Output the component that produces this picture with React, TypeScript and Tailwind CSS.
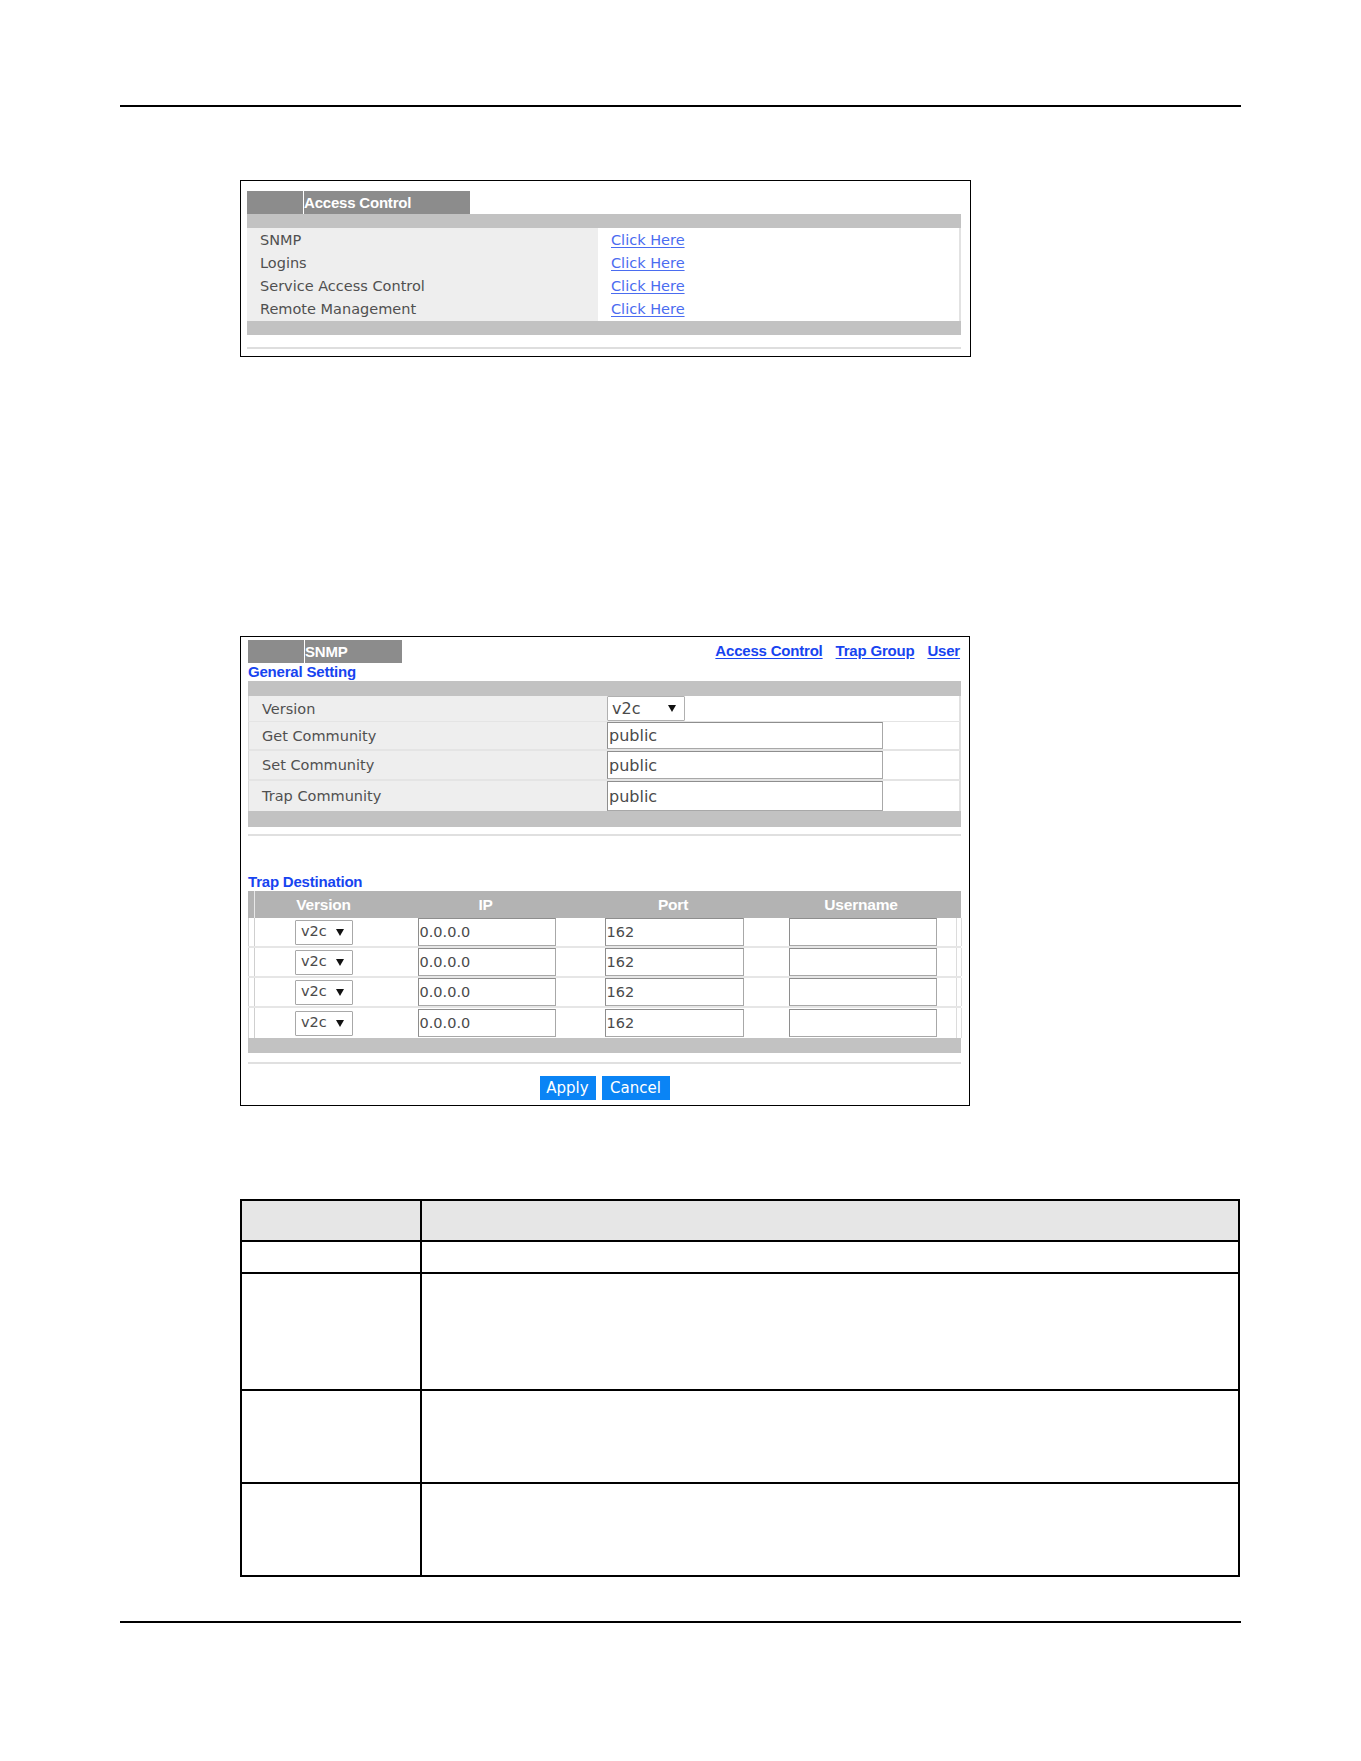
import React from "react";

const REG = { fontFamily: '"DejaVu Sans", "Liberation Sans", sans-serif' };
const BOLD = { fontFamily: '"Liberation Sans", Arial, sans-serif' };

function Arrow() {
  return (
    <svg width="8" height="7" viewBox="0 0 8 7" className="shrink-0">
      <path d="M0 0 H8 L4 7 Z" fill="#111" />
    </svg>
  );
}

function Tab({ label, width }: { label: string; width: string }) {
  return (
    <div className={`flex h-[23px] bg-[#8c8c8c] ${width}`}>
      <div className="w-[56px] shrink-0" />
      <div className="w-px bg-white shrink-0" />
      <div
        className="text-white font-bold text-[15px] leading-[23px] tracking-[-0.2px]"
        style={BOLD}
      >
        {label}
      </div>
    </div>
  );
}

function AccessRow({ label, last }: { label: string; last?: boolean }) {
  return (
    <div
      className={`grid grid-cols-[351px_1fr] ${last ? "h-[24px]" : "h-[23px] border-b-2 border-[#e2e2e2]"} border-r-2 border-r-[#e2e2e2]`}
    >
      <div className="bg-[#eeeeee] pl-[13px] pt-[2px] text-[14.5px] leading-[21px] text-[#505050]" style={REG}>
        {label}
      </div>
      <div className="bg-white pl-[13px] pt-[2px] text-[14.5px] leading-[21px]" style={REG}>
        <a className="text-[#4a6cf0] underline underline-offset-2 decoration-1">Click Here</a>
      </div>
    </div>
  );
}

function GeneralRow({ label, h, children, last }: { label: string; h: string; children: React.ReactNode; last?: boolean }) {
  return (
    <div
      className={`grid grid-cols-[358px_1fr] ${h} border-l border-[#d8d8d8] border-r-2 border-r-[#e0e0e0] ${last ? "" : "border-b-2 border-b-[#e4e4e4]"}`}
    >
      <div className="bg-[#eeeeee] pl-[13px] pt-[2px] flex items-center text-[14.5px] text-[#505050]" style={REG}>
        {label}
      </div>
      <div className="bg-white flex items-center">{children}</div>
    </div>
  );
}

function TextBox({ value }: { value: string }) {
  return (
    <div
      className="w-[276px] h-full border border-[#a8a8a8] border-t-[#8e8e8e] border-l-[#8e8e8e] pl-[1px] pt-[1px] flex items-center text-[16px] text-[#4a4a4a] bg-white"
      style={REG}
    >
      {value}
    </div>
  );
}

function TrapRow({ last }: { last?: boolean }) {
  return (
    <div className={`flex h-[30px] ${last ? "" : "border-b-2 border-[#e6e6e6]"}`}>
      <div className="w-[6px] shrink-0 border-l border-[#cfcfcf]" />
      <div className="grid grid-cols-[138px_187px_188px_188px] border-l border-[#cfcfcf]">
        <div className="flex items-center justify-center">
          <div
            className="w-[58px] h-[25px] border border-[#a8a8a8] rounded-[1px] flex items-center justify-between pl-[5px] pr-[8px] text-[14.5px] text-[#4a4a4a]"
            style={REG}
          >
            <span>v2c</span>
            <Arrow />
          </div>
        </div>
        <div className="flex items-center justify-center">
          <div
            className="w-[138px] h-[28px] border border-[#a8a8a8] border-t-[#8e8e8e] border-l-[#8e8e8e] pl-[1px] pt-[1px] flex items-center text-[14.5px] text-[#4a4a4a]"
            style={REG}
          >
            0.0.0.0
          </div>
        </div>
        <div className="flex items-center justify-center">
          <div
            className="w-[139px] h-[28px] border border-[#a8a8a8] border-t-[#8e8e8e] border-l-[#8e8e8e] pl-[1px] pt-[1px] flex items-center text-[14.5px] text-[#4a4a4a]"
            style={REG}
          >
            162
          </div>
        </div>
        <div className="flex items-center pl-[21px]">
          <div className="w-[148px] h-[28px] border border-[#a8a8a8] border-t-[#8e8e8e] border-l-[#8e8e8e]" />
        </div>
      </div>
      <div className="w-[6px] shrink-0 border-l border-[#dcdcdc] border-r border-r-[#dcdcdc]" />
    </div>
  );
}

export default function App() {
  return (
    <div className="w-[1361px] h-[1761px] bg-white overflow-hidden">
      {/* page header rule */}
      <div className="pt-[105px] pl-[120px]">
        <div className="w-[1121px] h-[2px] bg-black" />
      </div>

      {/* Access Control panel */}
      <div className="mt-[73px] ml-[240px] w-[731px] h-[177px] border border-black pt-[10px] pl-[6px] pr-[9px]">
        <Tab label="Access Control" width="w-[223px]" />
        <div className="h-[14px] bg-[#c2c2c2]" />
        <AccessRow label="SNMP" />
        <AccessRow label="Logins" />
        <AccessRow label="Service Access Control" />
        <AccessRow label="Remote Management" last />
        <div className="h-[14px] bg-[#c2c2c2]" />
        <div className="mt-[12px] h-[2px] bg-[#dedede]" />
      </div>

      {/* SNMP panel */}
      <div className="mt-[279px] ml-[240px] w-[730px] h-[470px] border border-black pt-[3px] pl-[7px] pr-[8px]">
        <div className="flex justify-between items-center h-[23px]">
          <Tab label="SNMP" width="w-[154px]" />
          <div className="flex gap-[13px] pr-[1px] text-[15px] font-bold text-[#1744f0] tracking-[-0.2px]" style={BOLD}>
            <a className="underline underline-offset-2">Access Control</a>
            <a className="underline underline-offset-2">Trap Group</a>
            <a className="underline underline-offset-2">User</a>
          </div>
        </div>
        <div className="h-[18px] text-[15px] leading-[18px] font-bold text-[#1744f0] tracking-[-0.2px]" style={BOLD}>
          General Setting
        </div>
        <div className="h-[15px] bg-[#c2c2c2]" />
        <GeneralRow label="Version" h="h-[26px]">
          <div
            className="w-[78px] h-[25px] border border-[#b0b0b0] rounded-[1px] flex items-center justify-between pl-[4px] pr-[8px] text-[16px] text-[#4a4a4a]"
            style={REG}
          >
            <span>v2c</span>
            <Arrow />
          </div>
        </GeneralRow>
        <GeneralRow label="Get Community" h="h-[29px]">
          <TextBox value="public" />
        </GeneralRow>
        <GeneralRow label="Set Community" h="h-[30px]">
          <TextBox value="public" />
        </GeneralRow>
        <GeneralRow label="Trap Community" h="h-[30px]" last>
          <TextBox value="public" />
        </GeneralRow>
        <div className="h-[16px] bg-[#c2c2c2]" />
        <div className="mt-[7px] h-[2px] bg-[#e0e0e0]" />

        <div className="h-[55px] flex items-end">
          <div className="text-[15px] leading-[18px] font-bold text-[#1744f0] tracking-[-0.2px]" style={BOLD}>
            Trap Destination
          </div>
        </div>
        <div className="flex h-[27px] bg-[#b3b3b3]">
          <div className="w-[6px] shrink-0" />
          <div className="w-px bg-[#e8e8e8] shrink-0" />
          <div
            className="grid grid-cols-[137px_187px_188px_188px] items-center text-white font-bold text-[15.5px] tracking-[-0.2px]"
            style={BOLD}
          >
            <div className="text-center">Version</div>
            <div className="text-center">IP</div>
            <div className="text-center">Port</div>
            <div className="text-center">Username</div>
          </div>
        </div>
        <TrapRow />
        <TrapRow />
        <TrapRow />
        <TrapRow last />
        <div className="h-[15px] bg-[#c2c2c2]" />
        <div className="mt-[9px] h-[2px] bg-[#e0e0e0]" />
        <div className="mt-[12px] flex justify-center gap-[6px]">
          <button
            className="h-[24px] w-[56px] bg-[#0a84f5] text-white text-[15px] leading-[24px]"
            style={REG}
          >
            Apply
          </button>
          <button
            className="h-[24px] w-[68px] bg-[#0a84f5] text-white text-[15px] leading-[24px]"
            style={REG}
          >
            Cancel
          </button>
        </div>
      </div>

      {/* field description table */}
      <table className="mt-[93px] ml-[240px] w-[1000px] border-collapse table-fixed">
        <tbody>
          <tr className="h-[41px] bg-[#e6e6e6]">
            <td className="w-[180px] border-2 border-black" />
            <td className="border-2 border-black" />
          </tr>
          <tr className="h-[32px]">
            <td className="border-2 border-black" />
            <td className="border-2 border-black" />
          </tr>
          <tr className="h-[117px]">
            <td className="border-2 border-black" />
            <td className="border-2 border-black" />
          </tr>
          <tr className="h-[93px]">
            <td className="border-2 border-black" />
            <td className="border-2 border-black" />
          </tr>
          <tr className="h-[93px]">
            <td className="border-2 border-black" />
            <td className="border-2 border-black" />
          </tr>
        </tbody>
      </table>

      {/* page footer rule */}
      <div className="mt-[44px] pl-[120px]">
        <div className="w-[1121px] h-[2px] bg-black" />
      </div>
    </div>
  );
}
